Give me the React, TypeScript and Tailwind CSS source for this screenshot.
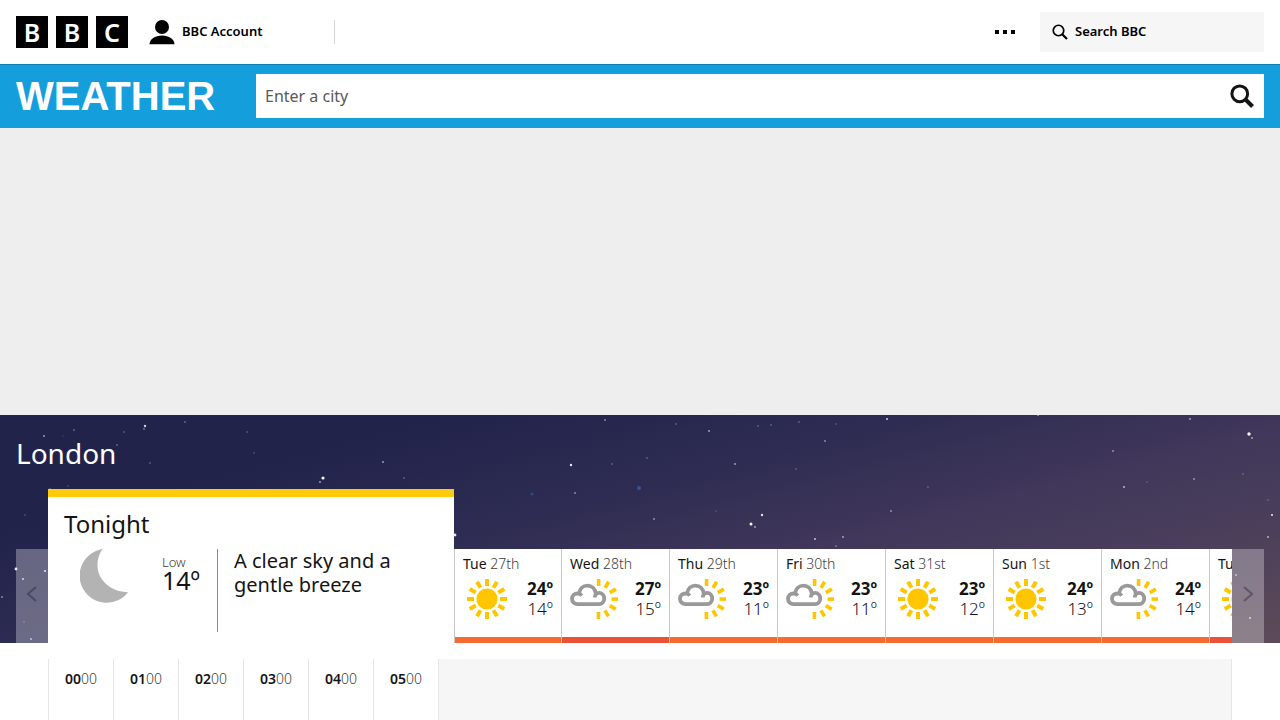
import React from "react";

type Kind = "sun" | "cloud";

const days: { day: string; date: string; kind: Kind; high: number; low: number; hot: boolean }[] = [
  { day: "Tue", date: "27th", kind: "sun", high: 24, low: 14, hot: false },
  { day: "Wed", date: "28th", kind: "cloud", high: 27, low: 15, hot: true },
  { day: "Thu", date: "29th", kind: "cloud", high: 23, low: 11, hot: false },
  { day: "Fri", date: "30th", kind: "cloud", high: 23, low: 11, hot: false },
  { day: "Sat", date: "31st", kind: "sun", high: 23, low: 12, hot: false },
  { day: "Sun", date: "1st", kind: "sun", high: 24, low: 13, hot: false },
  { day: "Mon", date: "2nd", kind: "cloud", high: 24, low: 14, hot: false },
  { day: "Tue", date: "3rd", kind: "sun", high: 26, low: 15, hot: true },
];

const hours = ["00", "01", "02", "03", "04", "05"];

/* x, y, radius, opacity */
const stars: [number, number, number, number][] = [
  [145, 11, 1.2, 0.8], [144, 14, 0.8, 0.6], [185, 7, 0.8, 0.5], [44, 21, 0.9, 0.6], [74, 15, 0.8, 0.5],
  [124, 17, 0.8, 0.4], [63, 21, 0.6, 0.3], [247, 17, 0.8, 0.35], [117, 30, 0.8, 0.5], [150, 48, 0.8, 0.4],
  [254, 38, 0.8, 0.3], [383, 47, 0.9, 0.6], [404, 63, 0.8, 0.4], [323, 63, 1.6, 0.95], [320, 67, 0.9, 0.6],
  [50, 74, 0.8, 0.5], [68, 71, 0.7, 0.3], [25, 100, 0.8, 0.3], [16, 154, 1.4, 0.9], [45, 156, 1.1, 0.8],
  [23, 164, 1.1, 0.7], [2, 182, 0.9, 0.5], [24, 207, 0.8, 0.3], [31, 224, 1, 0.6], [455, 120, 1.4, 0.9],
  [605, 5, 0.9, 0.5], [676, 9, 0.8, 0.4], [709, 16, 0.9, 0.6], [758, 11, 0.8, 0.4], [771, 10, 0.8, 0.4],
  [799, 7, 0.8, 0.4], [836, 9, 0.8, 0.3], [887, 4, 1, 0.8], [825, 26, 0.9, 0.5], [571, 50, 1.2, 0.9],
  [612, 49, 0.8, 0.4], [647, 43, 0.8, 0.4], [735, 49, 0.9, 0.6], [796, 54, 0.8, 0.35], [575, 78, 0.9, 0.5],
  [928, 72, 0.8, 0.35], [891, 96, 0.9, 0.5], [654, 104, 0.9, 0.5], [716, 96, 0.7, 0.3], [762, 100, 1.2, 0.85],
  [751, 109, 1.5, 0.95], [755, 112, 0.9, 0.6], [815, 124, 1, 0.7], [843, 122, 0.9, 0.6], [836, 131, 0.8, 0.5],
  [1190, 4, 0.9, 0.6], [1038, 0, 0.9, 0.6], [1249, 19, 1.7, 0.95], [1252, 23, 0.9, 0.6], [1113, 36, 0.9, 0.5],
  [1124, 72, 1, 0.65], [1147, 67, 0.7, 0.3], [1194, 64, 0.9, 0.5], [1243, 59, 0.8, 0.35], [1272, 100, 1.1, 0.85],
  [1268, 122, 1, 0.6], [1268, 85, 0.8, 0.3], [1236, 160, 0.9, 0.6], [1250, 203, 1, 0.7],
];

const rays = [0, 30, 60, 90, 120, 150, 180, 210, 240, 270, 300, 330];

function NightSky() {
  return (
    <svg className="absolute inset-0 h-full w-full" viewBox="0 0 1280 228" preserveAspectRatio="xMidYMid slice" aria-hidden="true">
      <defs>
        <linearGradient id="dusk" gradientUnits="userSpaceOnUse" x1="454" y1="0" x2="560" y2="407">
          <stop offset="0" stopColor="#22234b" />
          <stop offset="0.28" stopColor="#2e2c52" />
          <stop offset="0.52" stopColor="#40375a" />
          <stop offset="0.75" stopColor="#4b3f5a" />
          <stop offset="1" stopColor="#5c4a58" />
        </linearGradient>
      </defs>
      <rect width="1280" height="228" fill="url(#dusk)" />
      {stars.map(([x, y, r, o]) => (
        <circle key={`${x}-${y}`} cx={x} cy={y} r={r} fill="#fff" opacity={o} />
      ))}
      <circle cx="532" cy="79" r="1.5" fill="#2b5b9a" opacity="0.7" />
      <circle cx="639" cy="73" r="2" fill="#3d5fa8" opacity="0.7" />
    </svg>
  );
}

function SearchIcon({ className, thin }: { className: string; thin?: boolean }) {
  return (
    <svg className={className} viewBox="0 0 32 32" fill="none" aria-hidden="true">
      <circle cx="13" cy="13" r="10.5" stroke="currentColor" strokeWidth={thin ? 3.4 : 4} />
      <path d="M20 20l10 10" stroke="currentColor" strokeWidth={thin ? 4.4 : 5.5} />
    </svg>
  );
}

function SunIcon() {
  return (
    <svg className="h-10 w-10 shrink-0" viewBox="0 0 40 40" role="img" aria-label="Sunny">
      <circle cx="20" cy="20" r="10.6" fill="#ffc600" />
      {rays.map((a) => (
        <rect key={a} x="18" y="0" width="4" height="7" fill="#ffc600" transform={`rotate(${a} 20 20)`} />
      ))}
    </svg>
  );
}

function CloudIcon() {
  return (
    <svg className="h-10 w-12 shrink-0" viewBox="0 0 48 40" role="img" aria-label="Sunny intervals">
      {rays.slice(0, 7).map((a) => (
        <rect key={a} x="26.800" y="0" width="3.600" height="7" fill="#ffc600" transform={`rotate(${a} 28.500 20)`} />
      ))}
      <path
        d="M26 18.500c.2-2.500 1.200-4.300 3.500-4.300 2.700 0 4.600 2.500 4.600 5.400 0 3-2.100 5.500-5.100 5.500H7.500C4.500 25.100 2 22.800 2 19.700s2.400-5.200 5.500-5.200h1.400C9.200 10.200 13 6.700 17.300 6.700c4.200 0 7.400 2.700 8.300 6.700.3 1.500.5 3.300.4 5.100"
        fill="#fff"
      />
      <path
        d="M24.800 18.400c0-2.600 1.700-4.500 4.300-4.500 2.900 0 5.100 2.500 5.100 5.500 0 3.100-2.200 5.700-5.200 5.700H7.500C4.500 25.100 2 22.800 2 19.700s2.400-5.200 5.500-5.200c1.800 0 3.300.8 4.300 2.100M9.300 14.200c.3-4.500 3.900-7.500 8.200-7.500 4.400 0 7.700 3.200 8.200 7.800"
        fill="none"
        stroke="#999"
        strokeWidth="3.800"
        strokeLinejoin="round"
      />
    </svg>
  );
}

function Chevron({ right }: { right?: boolean }) {
  return (
    <svg className="h-4 w-4" viewBox="0 0 16 16" fill="none" aria-hidden="true">
      <path d={right ? "M4 1l8 7-8 7" : "M12 1L4 8l8 7"} stroke={right ? "#61566a" : "#4c4a62"} strokeWidth="2.200" />
    </svg>
  );
}

export default function App() {
  return (
    <div className="flex min-h-screen flex-col bg-white font-['Noto_Sans','Open_Sans',sans-serif] text-[#141414]">
      <header className="flex h-16 items-center px-4">
        <a href="#home" aria-label="BBC" className="flex gap-2">
          {["B", "B", "C"].map((letter, i) => (
            <span key={i} className="flex h-8 w-8 items-center justify-center bg-black text-[25px] leading-8 font-semibold text-white">
              {letter}
            </span>
          ))}
        </a>
        <a href="#account" className="ml-5 flex h-6 w-[187px] items-center gap-1.5 border-r border-[#d4d4d4] text-[13px] leading-5 font-semibold text-black">
          <svg className="h-7 w-7" viewBox="0 0 28 28" aria-hidden="true">
            <circle cx="14" cy="9" r="7" />
            <path d="M1.500 26.300c0-5 5.600-8.800 12.500-8.800s12.500 3.800 12.500 8.800z" />
          </svg>
          <span className="pb-0.5">BBC Account</span>
        </a>
        <button type="button" aria-label="More menu" className="ml-auto flex gap-1">
          <span className="h-1 w-1 bg-black" />
          <span className="h-1 w-1 bg-black" />
          <span className="h-1 w-1 bg-black" />
        </button>
        <a href="#search" className="ml-[25px] flex h-10 w-56 items-center gap-[7px] bg-[#f6f6f6] px-3 text-[13px] font-semibold text-black">
          <SearchIcon className="h-4 w-4" thin />
          Search BBC
        </a>
      </header>

      <div className="flex h-16 items-start border-t border-[#107eb4] bg-[#149edc] px-4 pt-[9px]">
        <a href="#weather" className="w-60 shrink-0 font-['Liberation_Sans',Arial,sans-serif] text-[40px] leading-11 font-bold text-white">
          WEATHER
        </a>
        <form className="flex h-11 flex-1 items-center bg-white" onSubmit={(e) => e.preventDefault()}>
          <input
            type="text"
            aria-label="Enter a city"
            placeholder="Enter a city"
            className="h-11 min-w-0 flex-1 px-[9px] text-base text-[#404040] outline-none placeholder:text-[#5a5a5a]"
          />
          <button type="submit" aria-label="Search" className="flex h-11 w-11 items-center justify-center">
            <SearchIcon className="h-6 w-6" />
          </button>
        </form>
      </div>

      <div className="h-[287px] bg-[#eeeeee]" />

      <main className="flex flex-1 flex-col">
        <section className="relative overflow-hidden bg-[#22224a]">
          <NightSky />
          <div className="relative px-4">
            <h1 className="pt-[18px] pb-4 text-[28px] leading-10 text-white">London</h1>
            <div className="flex items-end">
              <button type="button" aria-label="Previous days" className="flex h-[94px] w-8 shrink-0 items-center justify-center bg-white/30 pb-1">
                <Chevron />
              </button>
              <div className="flex min-w-0 flex-1 items-end overflow-hidden">
                <article className="h-[154px] w-[406px] shrink-0 border-t-8 border-[#ffca0a] bg-white px-4 pt-[11px]">
                  <h2 className="text-2xl leading-8">Tonight</h2>
                  <div className="mt-[9px] flex">
                    <svg className="ml-4 h-[54px] w-12" viewBox="0 0 48 54" role="img" aria-label="Clear sky">
                      <path d="M22.800 0A27 27 0 1 0 48 43.200C31 43 17.500 31 17.500 16.500 17.500 10 19.500 4 22.800 0z" fill="#b3b3b3" />
                    </svg>
                    <div className="ml-[34px] w-[55px] pt-[5px]">
                      <div className="text-[13px] leading-4 font-light text-[#404040]">Low</div>
                      <div className="text-[25px] leading-5">14º</div>
                    </div>
                    <p className="h-[83px] flex-1 border-l border-[#8a8a8a] pr-8 pl-4 text-xl leading-6">A clear sky and a gentle breeze</p>
                  </div>
                </article>
                <ol className="flex">
                  {days.map((d) => (
                    <li key={d.date} className="w-[108px] shrink-0 border-l border-[#c8c8c8] bg-white first:w-[107px]">
                      <a href={`#${d.date}`} className={`flex h-[94px] flex-col border-b-[6px] px-2 pt-[5px] ${d.hot ? "border-[#eb5038]" : "border-[#f56b30]"}`}>
                        <span className="text-sm leading-5">
                          {d.day} <span className="font-light text-[#404040]">{d.date}</span>
                        </span>
                        <span className="mt-[5px] flex items-start justify-between">
                          <span className={d.kind === "sun" ? "pl-1" : ""}>{d.kind === "sun" ? <SunIcon /> : <CloudIcon />}</span>
                          <span className="text-right text-[17px] leading-5">
                            <b className="block font-bold">{d.high}º</b>
                            <span className="block font-light">{d.low}º</span>
                          </span>
                        </span>
                      </a>
                    </li>
                  ))}
                </ol>
              </div>
              <button type="button" aria-label="Next days" className="flex h-[94px] w-8 shrink-0 items-center justify-center bg-white/30 pb-1">
                <Chevron right />
              </button>
            </div>
          </div>
        </section>

        <section className="mx-12 mt-4 flex flex-1 border-r border-[#e6e6e6] bg-[#f6f6f6]">
          {hours.map((h) => (
            <div key={h} className="w-[65px] border-l border-[#e6e6e6] bg-white pt-2.5 text-center text-sm leading-5">
              <span className="font-semibold">{h}</span>
              <span className="font-light text-[#404040]">00</span>
            </div>
          ))}
          <div className="flex-1 border-l border-[#e6e6e6]" />
        </section>
      </main>
    </div>
  );
}
